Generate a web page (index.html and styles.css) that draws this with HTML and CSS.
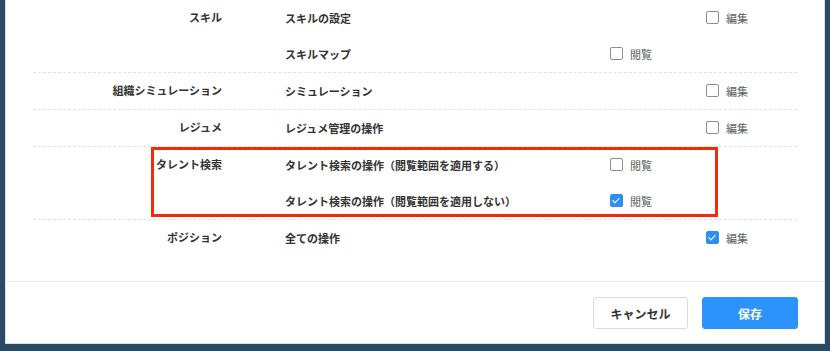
FILE: index.html
```html
<!DOCTYPE html>
<html>
<head>
	<title>権限設定</title>
	<meta charset="utf-8">
	<link rel="stylesheet" href="styles.css">
</head>
<body>
	<div class="modal">
		<div class="modal-body">
			<div class="group">
				<div class="group-name">スキル</div>
				<div class="items">
					<div class="item">
						<div class="item-name">スキルの設定</div>
						<div class="perm view"></div>
						<label class="perm edit"><span class="check"></span>編集</label>
					</div>
					<div class="item">
						<div class="item-name">スキルマップ</div>
						<label class="perm view"><span class="check"></span>閲覧</label>
						<div class="perm edit"></div>
					</div>
				</div>
			</div>
			<div class="group">
				<div class="group-name">組織シミュレーション</div>
				<div class="items">
					<div class="item">
						<div class="item-name">シミュレーション</div>
						<div class="perm view"></div>
						<label class="perm edit"><span class="check"></span>編集</label>
					</div>
				</div>
			</div>
			<div class="group">
				<div class="group-name">レジュメ</div>
				<div class="items">
					<div class="item">
						<div class="item-name">レジュメ管理の操作</div>
						<div class="perm view"></div>
						<label class="perm edit"><span class="check"></span>編集</label>
					</div>
				</div>
			</div>
			<div class="group highlighted">
				<div class="group-name">タレント検索</div>
				<div class="items">
					<div class="item">
						<div class="item-name">タレント検索の操作（閲覧範囲を適用する）</div>
						<label class="perm view"><span class="check"></span>閲覧</label>
						<div class="perm edit"></div>
					</div>
					<div class="item">
						<div class="item-name">タレント検索の操作（閲覧範囲を適用しない）</div>
						<label class="perm view"><span class="check checked"></span>閲覧</label>
						<div class="perm edit"></div>
					</div>
				</div>
				<div class="mark"></div>
			</div>
			<div class="group">
				<div class="group-name">ポジション</div>
				<div class="items">
					<div class="item">
						<div class="item-name">全ての操作</div>
						<div class="perm view"></div>
						<label class="perm edit"><span class="check checked"></span>編集</label>
					</div>
				</div>
			</div>
		</div>
		<div class="modal-footer">
			<button class="btn btn-cancel">キャンセル</button>
			<button class="btn btn-save">保存</button>
		</div>
	</div>
</body>
</html>
```

FILE: styles.css
```css
body{
	margin: 0;
	background: #2a4b63;
	font-family: "Noto Sans CJK JP", "Noto Sans", sans-serif;
	font-size: 11px;
	color: #333;
}
.modal{
	margin: -1px 5px 0;
	background: #fff;
	border: 1px solid #d6dee6;
}
.modal-body{
	padding: 0 27px 25px;
}
.group{
	display: flex;
	border-bottom: 1px dashed #e2e2e2;
}
.group:last-child{
	border-bottom: none;
}
.group-name{
	width: 189px;
	height: 36px;
	line-height: 34px;
	text-align: right;
	font-weight: bold;
	flex-shrink: 0;
}
.items{
	flex: 1;
	padding-left: 63px;
}
.item{
	display: flex;
	align-items: center;
	height: 36px;
	padding-bottom: 1px;
	box-sizing: border-box;
}
.item-name{
	width: 325px;
	font-weight: bold;
	flex-shrink: 0;
}
.perm{
	display: flex;
	align-items: center;
	color: #5e5e5e;
}
.perm.view{
	width: 96px;
}
.check{
	width: 11px;
	height: 11px;
	border: 1px solid #8e8e8e;
	border-radius: 2px;
	margin-right: 7px;
	position: relative;
}
.check.checked{
	background: #2d8ef5;
	border-color: #2d8ef5;
}
/* チェックマーク */
.check.checked:after{
	content: "";
	position: absolute;
	left: 3px;
	top: 1px;
	width: 3px;
	height: 6px;
	border: solid #fff;
	border-width: 0 1.5px 1.5px 0;
	transform: rotate(45deg);
}
.highlighted{
	position: relative;
}
.mark{
	position: absolute;
	left: 118px;
	top: 0;
	width: 567px;
	height: 70px;
	box-sizing: border-box;
	border: 3px solid #f52a0c;
}
.modal-footer{
	border-top: 1px solid #e8e8e8;
	padding: 15px 26px 14px;
	display: flex;
	justify-content: flex-end;
	gap: 14px;
}
.btn{
	width: 96px;
	height: 32px;
	border-radius: 3px;
	font-family: inherit;
	font-size: 12px;
	font-weight: bold;
	cursor: pointer;
}
.btn-cancel{
	width: 95px;
	background: #fff;
	border: 1px solid #dcdcdc;
	color: #333;
}
.btn-save{
	background: #2b93fb;
	border: 1px solid #2b93fb;
	color: #fff;
}
```
